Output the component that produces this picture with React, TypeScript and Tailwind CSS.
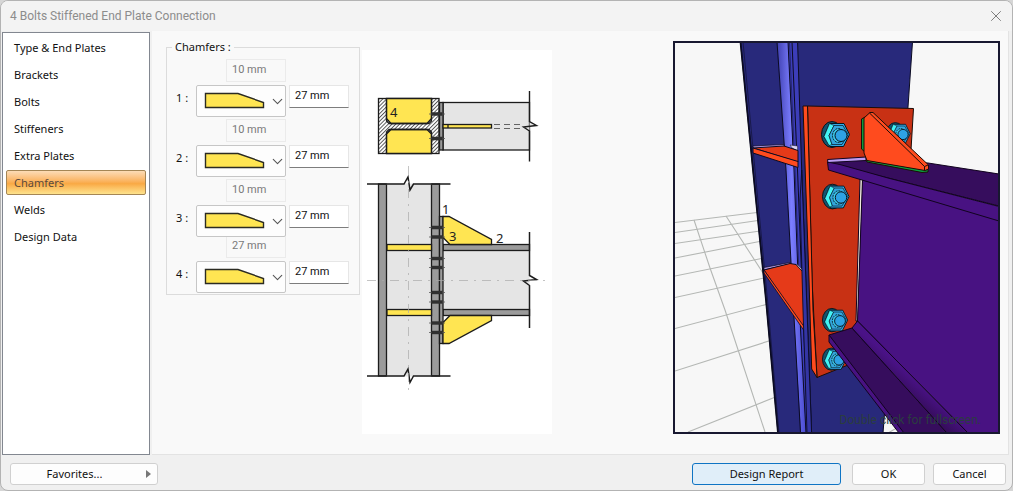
import { ReactNode } from "react";
import { ChevronDown, X } from "lucide-react";

type ChamferRow = {
  id: number;
  top: string;
  side: string;
};

const pages = ["Type & End Plates", "Brackets", "Bolts", "Stiffeners", "Extra Plates", "Chamfers", "Welds", "Design Data"];

const chamfers: ChamferRow[] = [
  { id: 1, top: "10 mm", side: "27 mm" },
  { id: 2, top: "10 mm", side: "27 mm" },
  { id: 3, top: "10 mm", side: "27 mm" },
  { id: 4, top: "27 mm", side: "27 mm" },
];

function TitleBar() {
  return (
    <header className="flex h-[30px] shrink-0 items-center justify-between bg-[#f3f3f3] pr-[7px] pl-[9px]">
      <h1 className="font-['Roboto',sans-serif] text-[12px] leading-4 text-[#8c8c8c]">4 Bolts Stiffened End Plate Connection</h1>
      <button type="button" aria-label="Close" className="text-[#7a7a7a]">
        <X size={18} strokeWidth={1.3} />
      </button>
    </header>
  );
}

function Sidebar() {
  return (
    <nav className="flex w-[148px] shrink-0 flex-col gap-[2px] border border-[#828790] bg-white px-[3px] pt-[2px]">
      {pages.map((page) =>
        page === "Chamfers" ? (
          <button
            key={page}
            type="button"
            aria-current="page"
            className="h-[25px] rounded-[2px] border border-[#a58655] bg-linear-to-b from-[#fcdcb6] via-[#f9a944] via-55% to-[#fde38c] px-[7px] text-left text-[#5b4a3c]"
          >
            {page}
          </button>
        ) : (
          <button key={page} type="button" className="h-[25px] border border-transparent px-[7px] text-left">
            {page}
          </button>
        ),
      )}
    </nav>
  );
}

function ChamferFields({ row }: { row: ChamferRow }) {
  return (
    <div className="grid grid-cols-[23px_90px_60px] gap-[3px] last:-mt-1">
      <input
        aria-label={`Chamfer ${row.id} height`}
        className="col-start-2 h-[23px] w-[60px] justify-self-end border border-[#ebebeb] bg-[#f9f9f9] px-[5px] pb-[3px] font-['Roboto',sans-serif] text-[#7a7a7a]"
        defaultValue={row.top}
        disabled
      />
      <label htmlFor={`side-${row.id}`} className="col-start-1 self-center pb-[6px] pl-[6px] whitespace-nowrap">
        {row.id} :
      </label>
      <div className="relative h-[32px]">
        <select
          aria-label={`Chamfer ${row.id} shape`}
          className="relative h-full w-full appearance-none rounded-[2px] border border-[#c6c6c6] bg-[#fdfdfd] text-transparent"
        >
          <option value="bevel" />
        </select>
        <svg className="pointer-events-none absolute top-[7px] left-[8px]" width="62" height="17" viewBox="0 0 62 17">
          <path d="M1.5 1.5H34L59.5 10.5V15.5H1.5Z" fill="#ffe552" stroke="#2b2b22" strokeWidth="1.4" />
        </svg>
        <ChevronDown className="pointer-events-none absolute top-[8px] right-0 text-[#555]" size={17} strokeWidth={1.5} />
      </div>
      <input
        id={`side-${row.id}`}
        className="h-[23px] w-[60px] border border-[#e6e6e6] border-b-[#7d7d7d] bg-white px-[5px] pb-[3px] font-['Roboto',sans-serif]"
        defaultValue={row.side}
      />
    </div>
  );
}

// Dark bolt stubs passing through the flange and the end plate
function BoltStub({ y }: { y: number }) {
  return (
    <g>
      <path d={`M429 ${y}H445`} stroke="#555" strokeWidth="0.8" />
      <path d={`M431.5 ${y}H442.5`} stroke="#303030" strokeWidth="3.4" />
    </g>
  );
}

function SectionDiagram() {
  return (
    <svg className="h-[384px] w-[190px] shrink-0 bg-white" viewBox="362 50 190 384" aria-label="Chamfer positions">
      <defs>
        <pattern id="hatch" width="2.7" height="2.7" patternUnits="userSpaceOnUse" patternTransform="rotate(45)">
          <rect width="2.7" height="2.7" fill="#fff" />
          <path d="M0.5 0V2.7" stroke="#333" strokeWidth="0.8" />
        </pattern>
      </defs>

      {/* plan */}
      <g stroke="#1c1c1c" strokeWidth="1.3">
        <rect x="443" y="102.5" width="86.5" height="47.5" fill="#e5e5e5" />
        <rect x="378.500" y="98.5" width="60.5" height="55" fill="url(#hatch)" />
        <path d="M386.5 98.5H431.5V118.5L427 123.5H391L386.5 118.5Z" fill="#ffe552" />
        <path d="M386.5 153.5H431.5V134L427 129.5H391L386.5 134Z" fill="#ffe552" />
        <path d="M386.5 98.5V121L389 123.5H429L431.5 121V98.500M386.5 153.5V132L389 129.5H429L431.5 132V153.5" fill="none" />
        <rect x="439.5" y="102.5" width="3.5" height="47.5" fill="#999" />
        <rect x="443" y="124.5" width="48.5" height="3.5" fill="#ffe552" />
        <path d="M448 124.5V128" />
      </g>
      <path d="M494 124.5H524M494 128.500H524" stroke="#555" strokeWidth="0.9" strokeDasharray="6 4" />
      <path d="M529.5 91V121.5L536.5 125.5L523.5 127L529.5 131V161.5" fill="#e5e5e5" stroke="#1c1c1c" strokeWidth="1.4" />
      <BoltStub y={114} />
      <BoltStub y={138.5} />

      {/* elevation */}
      <g stroke="#1c1c1c" strokeWidth="1.3">
        <rect x="386.5" y="184" width="45" height="192" fill="#e5e5e5" stroke="none" />
        <rect x="378.5" y="184" width="8" height="192" fill="#9b9b9b" />
        <rect x="431.5" y="184" width="8" height="192" fill="#9b9b9b" />
        <rect x="387" y="244.5" width="44.5" height="6" fill="#ffe552" />
        <rect x="387" y="309.5" width="44.5" height="6" fill="#ffe552" />
        <path d="M443 250.5H529.5V309.5H443Z" fill="#e5e5e5" stroke="none" />
        <rect x="443" y="244.5" width="86.5" height="6" fill="#9b9b9b" />
        <rect x="443" y="309.5" width="86.5" height="6" fill="#9b9b9b" />
        <rect x="439.5" y="216.5" width="3.5" height="127" fill="#9b9b9b" />
        <path d="M443 216.5H449L491.5 239.5V244.5H450L443 237.5Z" fill="#ffe552" />
        <path d="M443 343.5H449L491.5 320.5V315.5H450L443 322.5Z" fill="#ffe552" />
      </g>
      {[227.5, 237, 258.5, 267.5, 292.5, 302, 323, 332.5].map((y) => (
        <BoltStub key={y} y={y} />
      ))}
      <path d="M386.5 184H431.5M386.5 376H431.5" stroke="#e5e5e5" />
      <g fill="none" stroke="#1c1c1c" strokeWidth="1.5">
        <path d="M367 184H404L408 177L410 190L413.5 184H450.5" />
        <path d="M367 376H404L408 369L410 382.5L413.5 376H450.5" />
        <path d="M529.5 232V275.5L536.5 279.5L523.5 281L529.5 285.5V328" />
      </g>
      <path d="M408.5 166V394M367 280.5H547" stroke="#aaa" strokeWidth="0.7" strokeDasharray="9 6 2 6" fill="none" />

      <g fontSize="13" fill="#222">
        <text x="390" y="117">4</text>
        <text x="442" y="214">1</text>
        <text x="496" y="243">2</text>
        <text x="449" y="241">3</text>
      </g>
    </svg>
  );
}

function HexBolt({ x, y, scale = 1 }: { x: number; y: number; scale?: number }) {
  return (
    <g transform={`translate(${x} ${y}) scale(${scale})`} stroke="#06141c" strokeWidth="1" strokeLinejoin="round">
      <ellipse cx="-9" cy="-1" rx="10.5" ry="13" fill="#14536e" />
      <path d="M-17 1L-11.5 -12H3L8.5 -1L2.5 11H-11Z" fill="#31a9e8" />
      <path d="M-17 1L-11.5 -12L-7 -10L-12 0L-9 9L-12 10Z" fill="#43f3f5" strokeWidth="0.6" />
      <path d="M-7 -10H2L7 -1L1 9H-9L-12 0Z" fill="#33a6dd" strokeWidth="0.7" />
      <ellipse cx="-2.5" rx="6" ry="7" fill="#3bc6e8" strokeDasharray="2 1" />
      <circle r="6" fill="#2ea2e4" />
    </g>
  );
}

function ModelView() {
  return (
    <svg className="block h-[389px] w-[323px]" viewBox="675 43 323 389" aria-label="Connection model">
      <defs>
        <linearGradient id="columnFillet" x1="0" x2="1">
          <stop offset="0" stopColor="#3f40b0" />
          <stop offset="0.5" stopColor="#7b7dff" />
          <stop offset="1" stopColor="#4a4bcf" />
        </linearGradient>
        <linearGradient id="beamFillet" gradientUnits="userSpaceOnUse" x1="898" y1="388" x2="910" y2="374">
          <stop offset="0" stopColor="#360d5d" />
          <stop offset="1" stopColor="#4a1287" />
        </linearGradient>
      </defs>
      <rect x="675" y="43" width="323" height="389" fill="#f7f7f7" />

      {/* floor grid */}
      <g fill="none" stroke="#b4b7b4" strokeWidth="1.1">
        <path d="M675 222.500L757 212.500M675 232.500L758 220.500M675 243.500L760 231M675 258L762 241M675 276L764 258M675 297.500L766 277.500M675 328.500L768 304M675 371L772 340M688 432L778 396" />
        <path d="M694 220L710 268L725 310L765 432M726 216L763 273M883 436L900 426" />
      </g>

      {/* column */}
      <g stroke="#0b0b22" strokeWidth="1" strokeLinejoin="round">
        <path d="M740.5 42L912.500 42L908 107L883 433H778L766 300L753 170Z" fill="#28297b" />
        <path d="M740.5 42L753 170L766 300L778 433" fill="none" strokeWidth="1.8" />
        <path d="M743 42L755 170L767.5 300L779 433" fill="none" stroke="#15153f" strokeWidth="0.8" />
        <path d="M777 42L788 42L794 170L799 300L806 433H801L794 317L786 170Z" fill="url(#columnFillet)" stroke="none" />
        <path d="M788 42H797.6L801.7 170L807 310L811.6 433H806L799 300L794 170Z" fill="#3c3db9" />
        <path d="M777 42L786 170L794 317L800.5 433M792 42L797.5 170L803 310L808 433" fill="none" />
        <path d="M789.5 42L795 170L800 300" fill="none" stroke="#25266f" />
        <path d="M753 146L784 144.5V147L753 149Z" fill="#b49be6" strokeWidth="0.7" />
        <path d="M790 145L797.6 146V151L792 148Z" fill="#d9d2f2" strokeWidth="0.5" />
        <path d="M753 148L784 146L798 150.5V162Z" fill="#e53a19" />
        <path d="M753 148L798 161.5V167.5L753 153Z" fill="#ff4b1e" />
        <path d="M764 267.5L790 262.5V264L764 270Z" fill="#b49be6" strokeWidth="0.7" />
        <path d="M797 264L803 270V273L797 266Z" fill="#eee6fa" strokeWidth="0.5" />
        <path d="M764 270L790 263.5L796 264.5L803 272L805 330Z" fill="#e53a19" />
        <path d="M764 270L805 328V332L764 273Z" fill="#ff4b1e" strokeWidth="0.8" />
        <path d="M801.7 170L807 310L811.6 433L807 433L803 310L800 200Z" fill="#3435a4" strokeWidth="0.9" />
      </g>

      {/* end plate */}
      <g stroke="#1b0d08" strokeWidth="1" strokeLinejoin="round">
        <path d="M807.5 106L913.5 108.5L911 150L861 180L857 321L848 365L817 377.5L812 280Z" fill="#c83114" />
        <path d="M803 106H807.5L813 310L817 377.5L811.7 369L809 280Z" fill="#ff4b1e" />
      </g>
      <HexBolt x={841} y={135.5} />
      <HexBolt x={841} y={197.5} scale={0.95} />
      <HexBolt x={840} y={321} scale={0.9} />
      <HexBolt x={839} y={360} scale={0.85} />
      <HexBolt x={903} y={134.5} scale={0.85} />

      {/* beam */}
      <g stroke="#12041f" strokeWidth="1" strokeLinejoin="round">
        <path d="M860 179H863L858 321H856Z" fill="#efe9dd" />
        <path d="M862.5 179L999 220V433H968L857.5 321Z" fill="#481282" />
        <path d="M827.5 162L866 160L928 163L999 174V206L888 178L840 166Z" fill="#360d5d" />
        <path d="M827.5 162L840 164.5L888 178L999 206.5V221L828.5 170Z" fill="#481282" />
        <path d="M827.5 159.5L866 157V160.5L828 162.5Z" fill="#bd9cf2" />
        <path d="M829 335L852 328L947 433H902Z" fill="#360d5d" />
        <path d="M852 328L857.5 321L968 433H947Z" fill="url(#beamFillet)" />
        <path d="M829 335L904 433H899L829 342Z" fill="#481282" />
      </g>

      {/* bracket rib */}
      <g stroke="#1b0d08" strokeWidth="1" strokeLinejoin="round">
        <path d="M861.5 119L865 117V152L861.5 149Z" fill="#0c9a3c" />
        <path d="M866 160L926 170L928 169V172L922 172.5L867 162Z" fill="#0ca03f" />
        <path d="M864 118L870 112.5H873L928.5 165V169L925 170.5L867 160.5L864 153Z" fill="#ff4b1e" />
        <path d="M869.5 113L924.5 166.5L924.5 170M924.5 166.5L928 165" fill="none" />
      </g>
    </svg>
  );
}

function FooterButton({ children }: { children: ReactNode }) {
  return (
    <button type="button" className="h-[22px] w-[73px] rounded-[3px] border border-[#d0d0d0] bg-[#fdfdfd]">
      {children}
    </button>
  );
}

export default function App() {
  return (
    <div className="bg-[#d6d6d6] font-['Noto_Sans',sans-serif] text-[11px] leading-4 text-[#111]">
      <div className="flex min-h-screen flex-col overflow-hidden rounded-lg border border-[#b3b3b3] bg-[#f0f0f0]">
        <TitleBar />
        <main className="flex flex-1 gap-[2px] pr-[3px] pl-px">
          <div className="flex pt-px">
            <Sidebar />
          </div>
          <section className="flex min-w-0 flex-1 items-start border-r border-b border-[#e3e3e3] bg-[#f9f9f9]">
            <fieldset className="mt-[8px] ml-[14px] w-[194px] shrink-0 border border-[#dcdcdc] px-[3px] pb-px">
              <legend className="ml-[2px] px-[3px]">Chamfers :</legend>
              <div className="flex flex-col gap-[2px] pt-[4px]">
                {chamfers.map((row) => (
                  <ChamferFields key={row.id} row={row} />
                ))}
              </div>
            </fieldset>
            <div className="mt-[19px] ml-[2px]">
              <SectionDiagram />
            </div>
            <div className="relative mt-[10px] mr-[8px] ml-auto border-2 border-[#181830]">
              <ModelView />
              <p className="absolute right-[17px] bottom-[4px] font-['Roboto',sans-serif] text-[12px] text-[#2b3d40]">
                Double click for fullscreen.
              </p>
            </div>
          </section>
        </main>
        <footer className="flex h-[35px] shrink-0 items-center gap-2 pt-[2px] pr-[6px] pl-[9px]">
          <button type="button" className="flex h-[22px] w-[148px] items-center rounded-[3px] border border-[#d0d0d0] bg-[#fdfdfd] pr-[6px]">
            <span className="flex-1 pr-[8px]">Favorites...</span>
            <svg width="5" height="8" viewBox="0 0 5 8">
              <path d="M0 0L5 4L0 8Z" fill="#777" />
            </svg>
          </button>
          <button type="button" className="mr-[3px] ml-auto h-[22px] w-[149px] rounded-[3px] border border-[#0f74c4] bg-[#e0eef9]">
            Design Report
          </button>
          <FooterButton>OK</FooterButton>
          <FooterButton>Cancel</FooterButton>
        </footer>
      </div>
    </div>
  );
}
